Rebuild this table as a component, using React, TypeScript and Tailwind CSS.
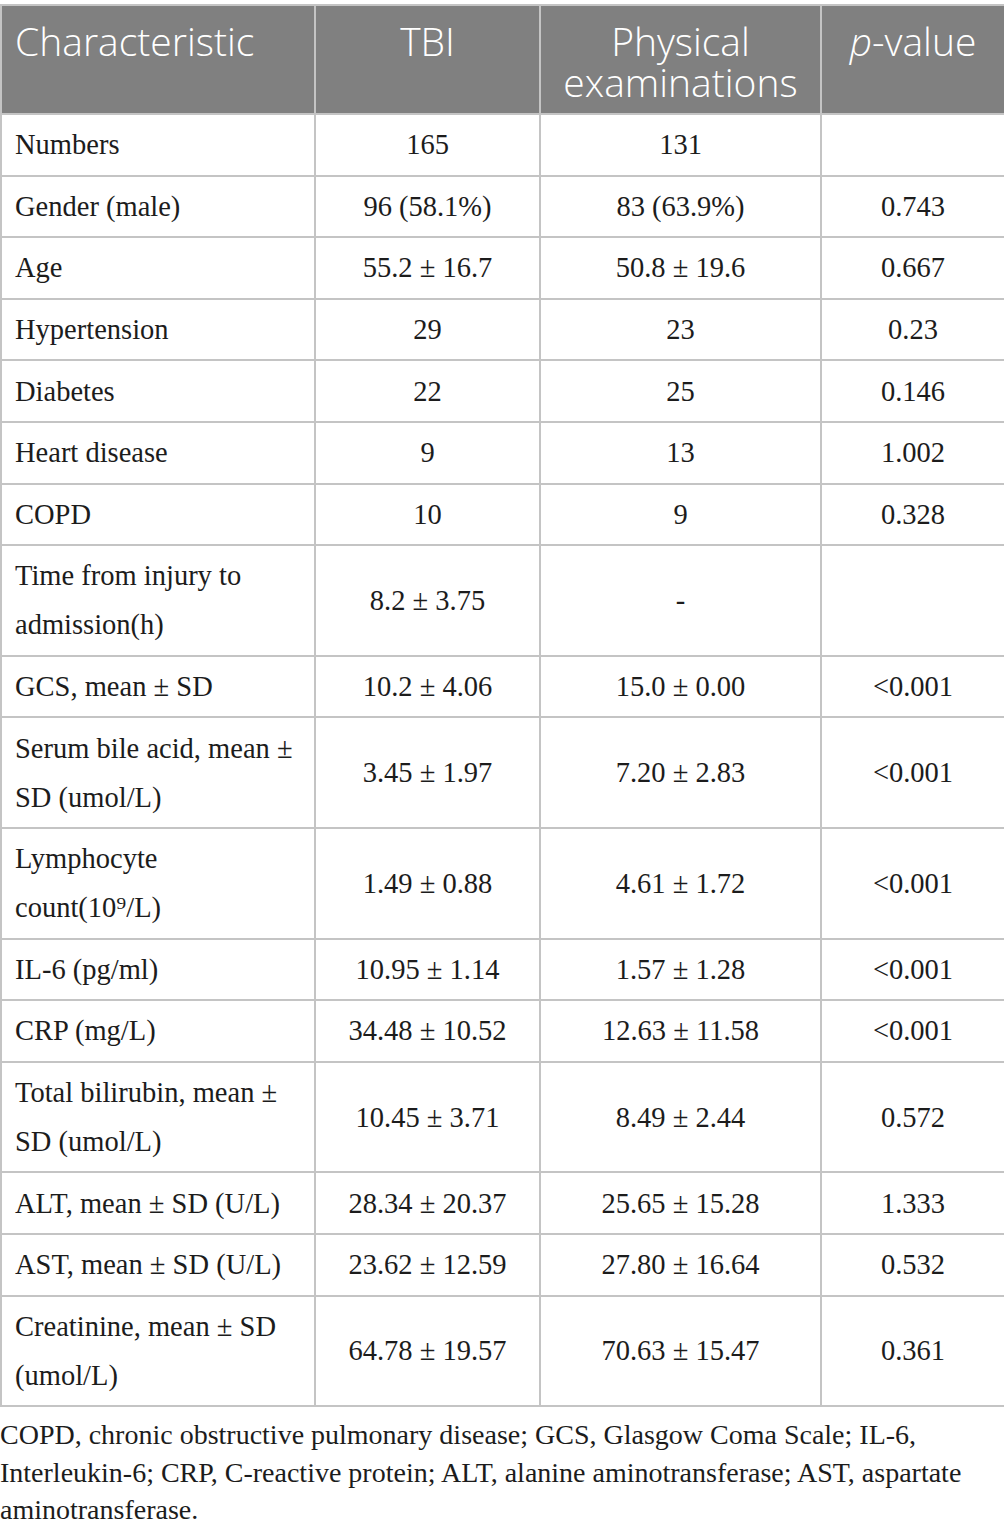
import React from 'react';

type Row = {
    label: React.ReactNode;
    tbi: string;
    phys: string;
    p: string;
};

const rows: Row[] = [
    { label: 'Numbers', tbi: '165', phys: '131', p: '' },
    { label: 'Gender (male)', tbi: '96 (58.1%)', phys: '83 (63.9%)', p: '0.743' },
    { label: 'Age', tbi: '55.2 ± 16.7', phys: '50.8 ± 19.6', p: '0.667' },
    { label: 'Hypertension', tbi: '29', phys: '23', p: '0.23' },
    { label: 'Diabetes', tbi: '22', phys: '25', p: '0.146' },
    { label: 'Heart disease', tbi: '9', phys: '13', p: '1.002' },
    { label: 'COPD', tbi: '10', phys: '9', p: '0.328' },
    { label: 'Time from injury to admission(h)', tbi: '8.2 ± 3.75', phys: '-', p: '' },
    { label: 'GCS, mean ± SD', tbi: '10.2 ± 4.06', phys: '15.0 ± 0.00', p: '<0.001' },
    { label: 'Serum bile acid, mean ± SD (umol/L)', tbi: '3.45 ± 1.97', phys: '7.20 ± 2.83', p: '<0.001' },
    { label: 'Lymphocyte count(10⁹/L)', tbi: '1.49 ± 0.88', phys: '4.61 ± 1.72', p: '<0.001' },
    { label: 'IL-6 (pg/ml)', tbi: '10.95 ± 1.14', phys: '1.57 ± 1.28', p: '<0.001' },
    { label: 'CRP (mg/L)', tbi: '34.48 ± 10.52', phys: '12.63 ± 11.58', p: '<0.001' },
    { label: 'Total bilirubin, mean ± SD (umol/L)', tbi: '10.45 ± 3.71', phys: '8.49 ± 2.44', p: '0.572' },
    { label: 'ALT, mean ± SD (U/L)', tbi: '28.34 ± 20.37', phys: '25.65 ± 15.28', p: '1.333' },
    { label: 'AST, mean ± SD (U/L)', tbi: '23.62 ± 12.59', phys: '27.80 ± 16.64', p: '0.532' },
    { label: 'Creatinine, mean ± SD (umol/L)', tbi: '64.78 ± 19.57', phys: '70.63 ± 15.47', p: '0.361' },
];

const serif = "font-['Liberation_Serif','Times_New_Roman',serif]";
const cell = 'border-2 border-[#c4c4c4] px-[12px] py-[5.3px] align-middle';
const head = 'border-2 border-[#c4c4c4] pt-[14px] pb-[11px] align-top font-light';

export default function App() {
    return (
        <div className="w-[1004px] bg-white pt-[4px]">
            <table className="w-[1004px] border-collapse table-fixed">
                <colgroup>
                    <col className="w-[314px]" />
                    <col className="w-[225px]" />
                    <col className="w-[281px]" />
                    <col className="w-[184px]" />
                </colgroup>
                <thead>
                    <tr className="bg-[#808080] text-white font-['Open_Sans',sans-serif] text-[39px] leading-[41px]">
                        <th className={`${head} px-[13px] text-left`}>Characteristic</th>
                        <th className={`${head} px-[8px] text-center`}>TBI</th>
                        <th className={`${head} px-[4px] text-center`}>Physical examinations</th>
                        <th className={`${head} px-[4px] text-center`}>
                            <i>p</i>-value
                        </th>
                    </tr>
                </thead>
                <tbody className={`${serif} text-[#1c1c1c] text-[28.5px] leading-[49px]`}>
                    {rows.map((r, i) => (
                        <tr key={i}>
                            <td className={`${cell} text-left pl-[13px]`}>{r.label}</td>
                            <td className={`${cell} text-center`}>{r.tbi}</td>
                            <td className={`${cell} text-center`}>{r.phys}</td>
                            <td className={`${cell} text-center`}>{r.p}</td>
                        </tr>
                    ))}
                </tbody>
            </table>
            <p className={`${serif} text-[#1c1c1c] text-[28px] leading-[37.5px] pt-[9px] whitespace-nowrap`}>
                COPD, chronic obstructive pulmonary disease; GCS, Glasgow Coma Scale; IL-6,
                <br />
                Interleukin-6; CRP, C-reactive protein; ALT, alanine aminotransferase; AST, aspartate
                <br />
                aminotransferase.
            </p>
        </div>
    );
}
